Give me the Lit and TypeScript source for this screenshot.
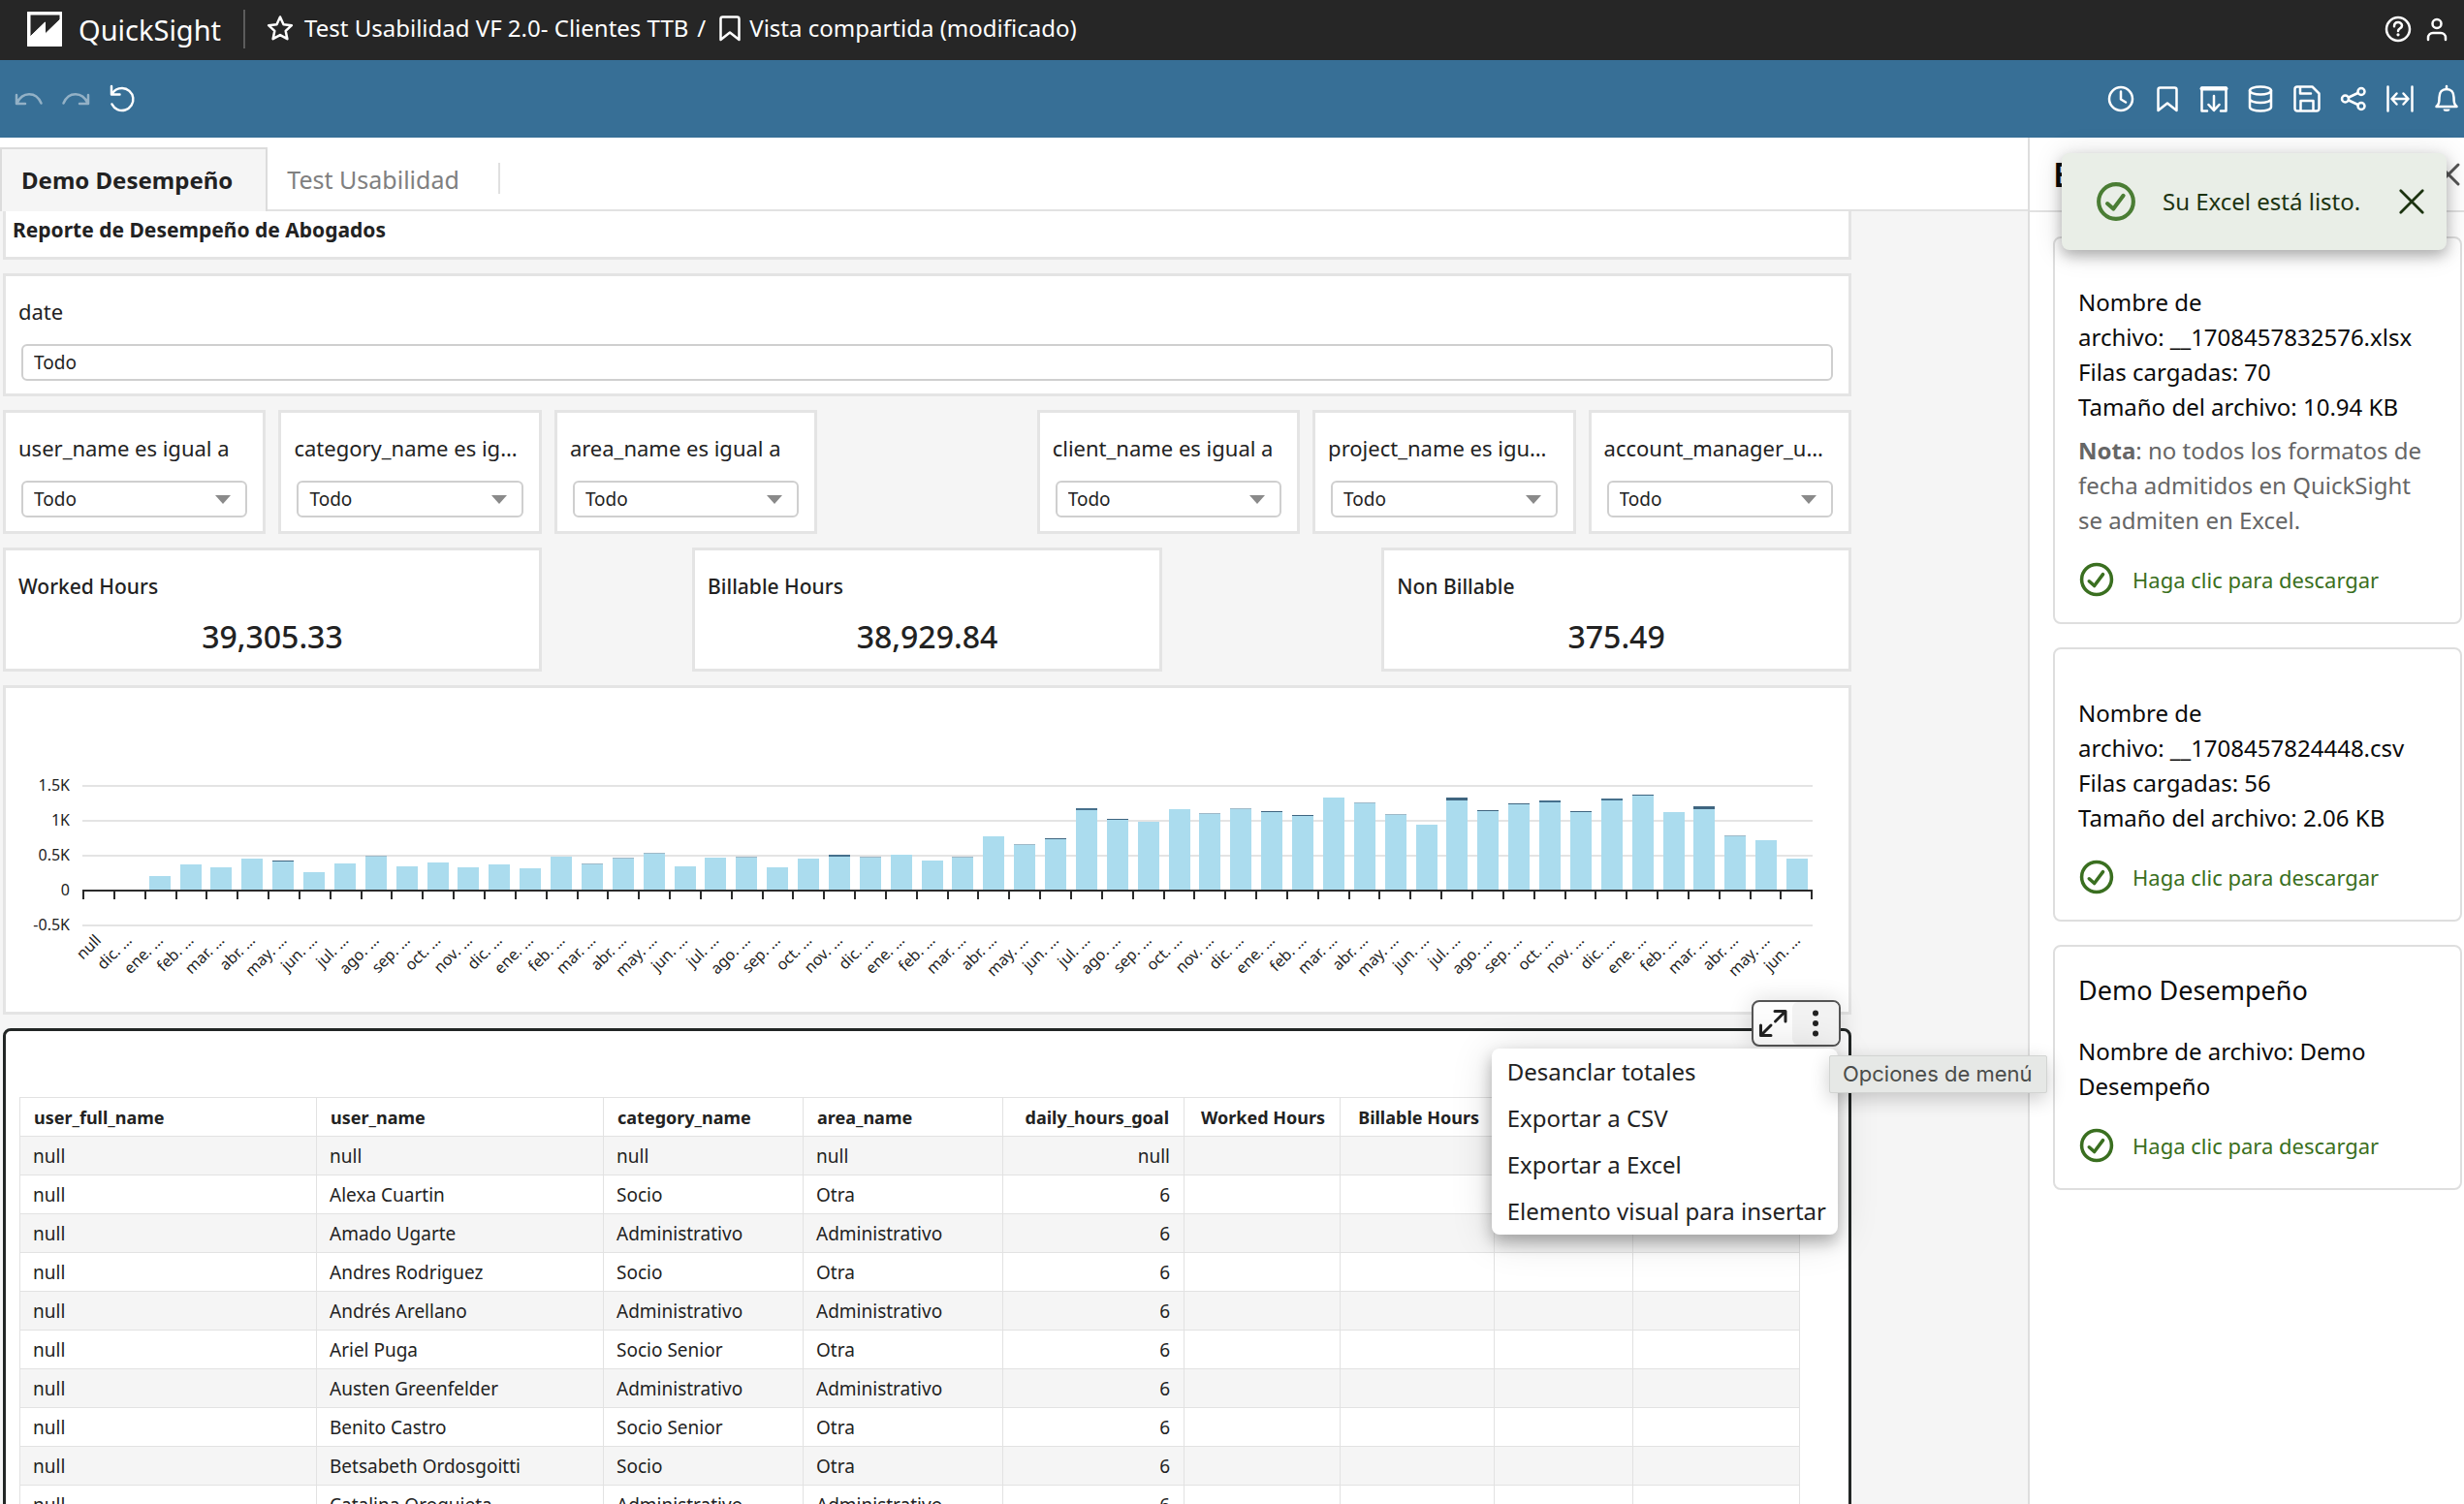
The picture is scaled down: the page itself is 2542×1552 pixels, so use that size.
import { LitElement, html, svg, css, nothing } from "lit";
import { customElement, property } from "lit/decorators.js";
import { classMap } from "lit/directives/class-map.js";
import { styleMap } from "lit/directives/style-map.js";

const base = css`
  *, *::before, *::after { box-sizing: border-box; }
  h1, h2, h3, p { margin: 0; font-weight: 400; }
  button {
    border: 0;
    padding: 0;
    margin: 0;
    background: none;
    color: inherit;
    font: inherit;
    cursor: pointer;
  }
  svg { display: block; fill: none; stroke: currentColor; }
`;

const icons = {
  undo: svg`<path d="M3 12v9h9M3.500 20.500C9 8.500 23 8 28.500 20.500"/>`,
  redo: svg`<path d="M29 12v9h-9M28.500 20.500C23 8.500 9 8 3.500 20.500"/>`,
  reset: svg`<path d="M5 3v8.500H13.500M5.500 11C8 6.500 12 5 16 5A11.500 11.500 0 1 1 5.500 21.500"/>`,
  clock: svg`<circle cx="16" cy="16" r="12"/><path d="M16 8.500v8l5 3"/>`,
  bookmark: svg`<path d="M6.500 28V6.500a2 2 0 0 1 2-2h15a2 2 0 0 1 2 2V28L16 20.500z"/>`,
  exportBox: svg`<path d="M9 28.500H3.500V4.500h25v24H23M16 13v14.500M10.500 22l5.500 6 5.500-6"/><path d="M3.500 5.500h25" stroke-width="4"/>`,
  database: svg`<ellipse cx="16" cy="7.500" rx="11" ry="4"/><path d="M5 7.500v17c0 2.200 5 4 11 4s11-1.800 11-4v-17M5 16c0 2.200 5 4 11 4s11-1.800 11-4"/>`,
  save: svg`<path d="M6 3.500h15.500l7 7V26a2.500 2.500 0 0 1-2.500 2.500H6A2.500 2.500 0 0 1 3.500 26V6A2.500 2.500 0 0 1 6 3.500zM9 4v6.500h11M9.500 28v-10h13v10"/>`,
  share: svg`<circle cx="7.500" cy="16" r="3.500"/><circle cx="24" cy="8.500" r="3.500"/><circle cx="24" cy="23.500" r="3.500"/><path d="M11 14.500l9.500-4.500M11 17.500l9.500 4.500"/>`,
  fit: svg`<path d="M3.500 3.500v25M28.500 3.500v25M7.500 16h17M12.500 10.500L7.500 16l5 5.500M19.500 10.500l5 5.500-5 5.500"/>`,
  bell: svg`<path d="M5.500 24h21c-2.500-2.500-3-4-3-9.500C23.500 9 20.500 6 16 6s-7.500 3-7.500 8.500c0 5.500-.5 7-3 9.500z"/><path d="M16 3v3"/><path d="M12.500 26.500h7a3.500 2.500 0 0 1-7 0z" fill="currentColor" stroke="none"/>`,
  help: svg`<circle cx="16" cy="16" r="12"/><path d="M12 13.200c0-5.600 8-5.200 8-.7 0 2.900-4 2.700-4 5.600"/><circle cx="16" cy="21.800" r="1.600" fill="currentColor" stroke="none"/>`,
  person: svg`<circle cx="16" cy="10.500" r="4.500"/><path d="M7 27v-2a5 5 0 0 1 5-5h8a5 5 0 0 1 5 5v2"/>`,
  star: svg`<path d="M16 4.500l3.500 7.700 8.400 1-6.200 5.700 1.700 8.300L16 23.100l-7.400 4.100 1.700-8.300-6.200-5.700 8.400-1z"/>`,
  close: svg`<path d="M6 6l20 20M26 6L6 26"/>`,
  check: svg`<circle cx="16" cy="16" r="13"/><path d="M9.500 17.500l4.500 4 7.500-10"/>`,
  expand: svg`<path d="M18 3.500h11V14M28 4.500L18.500 14M3.500 18v10.500H14M4.500 27.500L14 18"/>`,
  dots: svg`<g fill="currentColor" stroke="none"><circle cx="16" cy="5.500" r="3"/><circle cx="16" cy="16" r="3"/><circle cx="16" cy="26.500" r="3"/></g>`,
};
type IconName = keyof typeof icons;

const icon = (name: IconName, size = 32, stroke = 2) => html`
  <svg width=${size} height=${size} viewBox="0 0 32 32" stroke-width=${stroke}
    stroke-linecap="round" stroke-linejoin="round" aria-hidden="true">${icons[name]}</svg>`;

const MONTHS = ["ene.", "feb.", "mar.", "abr.", "may.", "jun.", "jul.", "ago.", "sep.", "oct.", "nov.", "dic."];

/** Monthly hours: [hours worked, size of the non-billable cap: 0 none, 1 faint, 2 thin, 3 medium, 4 thick]. */
const HOURS: [number, number][] = [
  [0, 0], [0, 0],
  [200, 0], [355, 0], [325, 0], [440, 0], [410, 2], [245, 0], [380, 0], [490, 1], [338, 0], [393, 0], [315, 0], [355, 0],
  [305, 0], [475, 0], [370, 1], [453, 1], [530, 1], [333, 0], [453, 0], [477, 1], [315, 0], [448, 0], [505, 3], [477, 1],
  [503, 0], [422, 0], [477, 1], [758, 0], [657, 1], [730, 2], [1170, 3], [1008, 2], [967, 0], [1147, 0], [1092, 1], [1160, 1],
  [1128, 2], [1072, 2], [1324, 0], [1253, 1], [1078, 1], [935, 0], [1324, 4], [1142, 2], [1240, 2], [1282, 3], [1120, 2], [1310, 3],
  [1356, 2], [1115, 0], [1193, 4], [773, 1], [703, 0], [448, 0],
];
const PX_PER_HOUR = 0.072;

@customElement("hours-chart")
class HoursChart extends LitElement {
  static styles = [base, css`
    :host { display: block; height: 340px; padding: 0 37px 0 0; }
    .chart { display: flex; gap: 13px; padding-top: 82px; }
    .scale { display: flex; flex-direction: column; width: 66px; text-align: right; }
    .scale span { font-size: 16px; line-height: 36px; }
    .plot { flex: 1; min-width: 0; padding-top: 18px; }
    .grid { height: 146px; background: repeating-linear-gradient(#e4e4e4 0 2px, transparent 2px 36px); }
    .bars { display: flex; align-items: flex-end; height: 110px; border-bottom: 2px solid #2a2a2a; }
    .slot { flex: 1; display: flex; justify-content: center; }
    .bar { width: 22px; background: #abdcee; }
    .cap1 { border-top: 1px solid #9fb9c8; }
    .cap2 { border-top: 1px solid #3f6580; }
    .cap3 { border-top: 2px solid #46708c; }
    .cap4 { border-top: 3px solid #3f6580; }
    .ticks { display: flex; height: 8px; border-right: 2px solid #2a2a2a; }
    .ticks i { flex: 1; border-left: 2px solid #2a2a2a; }
    .months { display: flex; padding-top: 1px; }
    .month { flex: 1; width: 0; display: flex; justify-content: flex-end; padding-right: 16px; }
    .month span {
      font-size: 16px;
      line-height: 20px;
      white-space: nowrap;
      transform: rotate(-45deg);
      transform-origin: 100% 50%;
    }
  `];

  private label(i: number) {
    if (i === 0) return "null";
    return `${MONTHS[(i + 10) % 12]} …`;
  }

  render() {
    return html`
      <div class="chart">
        <div class="scale">${["1.5K", "1K", "0.5K", "0", "-0.5K"].map((t) => html`<span>${t}</span>`)}</div>
        <div class="plot">
          <div class="grid">
            <div class="bars">
              ${HOURS.map(([h, cap]) => html`<div class="slot">${h
                ? html`<div class=${`bar cap${cap}`} style=${styleMap({ height: `${Math.round(h * PX_PER_HOUR)}px` })}></div>`
                : nothing}</div>`)}
            </div>
            <div class="ticks">${HOURS.map(() => html`<i></i>`)}</div>
          </div>
          <div class="months">${HOURS.map((_, i) => html`<div class="month"><span>${this.label(i)}</span></div>`)}</div>
        </div>
      </div>`;
  }
}

@customElement("filter-control")
class FilterControl extends LitElement {
  @property() label = "";
  @property() kind: "select" | "text" = "select";

  static styles = [base, css`
    :host { display: block; height: 128px; padding: 21px 13px 0; }
    :host([kind="text"]) { height: 127px; }
    label {
      display: block;
      margin-right: 8px;
      font-size: 22px;
      line-height: 30px;
      white-space: nowrap;
      overflow: hidden;
      text-overflow: ellipsis;
    }
    .field { position: relative; margin: 19px 3px 0; }
    select, input {
      display: block;
      width: 100%;
      height: 38px;
      margin: 0;
      padding: 0 11px;
      border: 2px solid #cfcfcf;
      border-radius: 6px;
      background: #fff;
      color: #222;
      font: inherit;
      font-size: 19px;
      appearance: none;
    }
    .caret {
      position: absolute;
      right: 17px;
      top: 15px;
      border: 8px solid transparent;
      border-top: 9px solid #8a8a8a;
      border-bottom: 0;
      pointer-events: none;
    }
  `];

  render() {
    return html`
      <label for="control" title=${this.label}>${this.label}</label>
      <div class="field">
        ${this.kind === "text"
          ? html`<input id="control" type="text" value="Todo">`
          : html`<select id="control"><option>Todo</option></select><span class="caret"></span>`}
      </div>`;
  }
}

const COLUMNS: [string, number][] = [
  ["user_full_name", 306], ["user_name", 296], ["category_name", 206], ["area_name", 206], ["daily_hours_goal", 187],
  ["Worked Hours", 161], ["Billable Hours", 159], ["", 143], ["", 172],
];
const ROWS = [
  ["null", "null", "null", "null", "null"],
  ["null", "Alexa Cuartin", "Socio", "Otra", "6"],
  ["null", "Amado Ugarte", "Administrativo", "Administrativo", "6"],
  ["null", "Andres Rodriguez", "Socio", "Otra", "6"],
  ["null", "Andrés Arellano", "Administrativo", "Administrativo", "6"],
  ["null", "Ariel Puga", "Socio Senior", "Otra", "6"],
  ["null", "Austen Greenfelder", "Administrativo", "Administrativo", "6"],
  ["null", "Benito Castro", "Socio Senior", "Otra", "6"],
  ["null", "Betsabeth Ordosgoitti", "Socio", "Otra", "6"],
  ["null", "Catalina Oroquieta", "Administrativo", "Administrativo", "6"],
];

@customElement("hours-table")
class HoursTable extends LitElement {
  static styles = [base, css`
    :host { display: block; position: relative; padding: 68px 51px 0 14px; }
    table { width: 100%; table-layout: fixed; border-collapse: collapse; font-size: 19px; }
    th, td {
      height: 40px;
      padding: 0 14px 0 13px;
      border: 1px solid #e2e2e2;
      text-align: left;
      white-space: nowrap;
      line-height: 24px;
    }
    th { font-size: 18px; font-weight: 700; padding: 0 15px 0 14px; }
    .num { text-align: right; }
    tbody tr:nth-child(odd) { background: #f5f5f5; }
    .actions {
      position: absolute;
      top: -32px;
      right: 8px;
      display: flex;
      width: 92px;
      height: 48px;
      border: 2px solid #555;
      border-radius: 8px;
      background: #fdfdfd;
      overflow: hidden;
      box-shadow: 0 0 24px rgba(0, 0, 0, 0.14);
    }
    .actions button { width: 40px; display: grid; place-items: center; }
    .actions .active { flex: 1; background: #f2f2f2; border-radius: 6px 0 0 6px; }
    .menu {
      position: absolute;
      top: 18px;
      right: 11px;
      display: flex;
      flex-direction: column;
      border-radius: 8px;
      background: #fff;
      box-shadow: 0 8px 16px rgba(0, 0, 0, 0.28), 0 4px 44px rgba(0, 0, 0, 0.14);
    }
    .menu button { padding: 0 12px 0 16px; font-size: 24px; line-height: 48px; text-align: left; white-space: nowrap; }
    .tip {
      position: absolute;
      top: 25px;
      left: calc(100% - 20px);
      padding: 0 14px 0 13px;
      border: 1px solid #d2d4d2;
      border-radius: 2px;
      background: #e6e8e6;
      color: #4a4c4a;
      font: 22px/37px Inter, sans-serif;
      white-space: nowrap;
      box-shadow: 0 6px 20px rgba(0, 0, 0, 0.2);
    }
  `];

  render() {
    return html`
      <table>
        <colgroup>${COLUMNS.map(([, w]) => html`<col style=${styleMap({ width: `${w}px` })}>`)}</colgroup>
        <thead><tr>${COLUMNS.map(([name], i) => html`<th scope="col" class=${classMap({ num: i > 3 })}>${name}</th>`)}</tr></thead>
        <tbody>
          ${ROWS.map((row) => html`<tr>${COLUMNS.map((_, i) => html`<td class=${classMap({ num: i > 3 })}>${row[i] ?? ""}</td>`)}</tr>`)}
        </tbody>
      </table>
      <div class="actions">
        <button aria-label="Maximizar">${icon("expand", 32, 3)}</button>
        <button class="active" aria-label="Opciones de menú">${icon("dots", 32)}</button>
      </div>
      <div class="menu" role="menu">
        ${["Desanclar totales", "Exportar a CSV", "Exportar a Excel", "Elemento visual para insertar"].map(
          (t) => html`<button role="menuitem">${t}</button>`)}
      </div>
      <div class="tip" role="tooltip">Opciones de menú</div>`;
  }
}

interface ExportFile { title?: string; name: string; rows?: string; size?: string; note?: boolean; }
const FILES: ExportFile[] = [
  { name: "__1708457832576.xlsx", rows: "70", size: "10.94 KB", note: true },
  { name: "__1708457824448.csv", rows: "56", size: "2.06 KB" },
  { title: "Demo Desempeño", name: "Demo Desempeño" },
];

@customElement("export-panel")
class ExportPanel extends LitElement {
  static styles = [base, css`
    :host { display: block; width: 450px; border-left: 2px solid #dedede; background: #fff; color: #0b0b0b; }
    .head {
      display: flex;
      align-items: center;
      justify-content: space-between;
      height: 77px;
      padding: 0 0 0 24px;
      border-bottom: 2px solid #e2e2e2;
    }
    h2 { font-size: 34px; font-weight: 600; line-height: 40px; }
    .head button { color: #555; }
    .list { display: flex; flex-direction: column; gap: 24px; padding: 25px 2px 24px 24px; }
    .file {
      padding: 48px 24px 24px;
      border: 2px solid #dedede;
      border-radius: 8px;
      font-size: 24px;
      line-height: 36px;
    }
    .titled { padding-top: 24px; }
    h3 { font-size: 27px; line-height: 42px; margin-bottom: 24px; }
    .note { margin-top: 9px; color: #666; }
    .note b { font-weight: 700; }
    .get {
      display: flex;
      align-items: center;
      gap: 18px;
      height: 40px;
      margin-top: 23px;
      color: #3a6f20;
      font-size: 22px;
      text-decoration: none;
    }
  `];

  render() {
    return html`
      <div class="head"><h2>Exportaciones</h2><button aria-label="Cerrar panel">${icon("close", 32, 3)}</button></div>
      <div class="list">
        ${FILES.map((f) => html`
          <article class=${classMap({ file: true, titled: !!f.title })}>
            ${f.title ? html`<h3>${f.title}</h3>` : nothing}
            <p>Nombre de archivo:&nbsp;${f.name}</p>
            ${f.rows ? html`<p>Filas cargadas: ${f.rows}</p>` : nothing}
            ${f.size ? html`<p>Tamaño del archivo: ${f.size}</p>` : nothing}
            ${f.note ? html`<p class="note"><b>Nota</b>: no todos los formatos de fecha admitidos en QuickSight se admiten en Excel.</p>` : nothing}
            <a class="get" href="#">${icon("check", 38, 3)}<span>Haga clic para descargar</span></a>
          </article>`)}
      </div>`;
  }
}

@customElement("app-root")
class AppRoot extends LitElement {
  static styles = [base, css`
    :host {
      display: flex;
      flex-direction: column;
      position: relative;
      height: 100vh;
      overflow: hidden;
      background: #fff;
      color: #222;
      font-family: "Noto Sans", "Open Sans", sans-serif;
    }
    .top {
      display: flex;
      align-items: center;
      height: 62px;
      flex: none;
      padding: 0 12px 2px 28px;
      background: #262626;
      color: #fff;
      font-size: 24px;
      line-height: 32px;
    }
    .brand { margin-left: 17px; padding-top: 2px; font-size: 29px; line-height: 40px; }
    .rule { width: 2px; height: 40px; margin: 0 20px 0 23px; background: #5c5c5c; }
    .crumbs { display: flex; align-items: center; gap: 9px; flex: 1; padding-bottom: 2px; }
    .crumbs h1 { font-size: 24px; line-height: 32px; }
    .view { display: flex; align-items: center; gap: 4px; }
    .account { display: flex; gap: 8px; }
    .tools {
      display: flex;
      align-items: center;
      justify-content: space-between;
      height: 80px;
      flex: none;
      padding: 0 2px 0 14px;
      background: #376f96;
      color: #fff;
    }
    .group { display: flex; gap: 16px; }
    .group .off { color: #93b1c6; }
    .body { display: flex; flex: 1; min-height: 0; }
    .work { flex: 1; min-width: 0; display: flex; flex-direction: column; background: #f5f5f5; }
    .tabs { display: flex; flex: none; height: 76px; padding-top: 10px; background: #fff; }
    .tabs::after { content: ""; flex: 1; border-bottom: 2px solid #e2e2e2; }
    .tab {
      padding: 2px 20px 0;
      border-bottom: 2px solid #e2e2e2;
      font-size: 25px;
      line-height: 32px;
      color: #808080;
    }
    .tab.on {
      padding: 0 34px 0 20px;
      border: 2px solid #dcdcdc;
      border-bottom: 0;
      background: #f5f5f5;
      color: #222;
      font-size: 24px;
      font-weight: 700;
    }
    .stop { display: flex; align-items: center; width: 22px; padding: 0 0 0 20px; border-bottom: 2px solid #e2e2e2; }
    .stop::before { content: ""; width: 2px; height: 32px; background: #e0e0e0; }
    .sheet {
      display: grid;
      grid-template-columns: repeat(27, minmax(0, 1fr));
      gap: 14px 13px;
      padding: 0 182px 0 3px;
    }
    .card { border: 3px solid #e4e4e4; background: #fff; }
    .full { grid-column: 1 / -1; }
    .w4 { grid-column-end: span 4; }
    .c1 { grid-column: 1 / span 8; }
    .c2 { grid-column: 11 / span 7; }
    .c3 { grid-column: 21 / span 7; }
    .skip { grid-column: 16 / span 4; }
    .heading { height: 50px; padding: 4px 7px 0; border-top: 0; font-size: 21px; line-height: 30px; font-weight: 700; }
    .kpi { height: 128px; padding: 22px 13px 0; }
    .kpi h2 { font-size: 21px; line-height: 30px; font-weight: 500; }
    .kpi p { margin-top: 17px; font-size: 32px; line-height: 40px; font-weight: 500; text-align: center; }
    .selected { border-color: #222625; border-radius: 8px; }
    export-panel { position: relative; flex: none; }
    hours-table { z-index: 1; }
    .toast {
      position: absolute;
      z-index: 2;
      top: 158px;
      right: 18px;
      display: flex;
      align-items: center;
      width: 397px;
      height: 100px;
      padding: 0 18px 0 34px;
      border-radius: 8px;
      background: #e9eee7;
      color: #1c3310;
      font-size: 24px;
      line-height: 32px;
      box-shadow: 0 6px 14px rgba(0, 0, 0, 0.26), 0 2px 30px rgba(0, 0, 0, 0.14);
    }
    .toast .ok { color: #4a7d34; }
    .toast p { flex: 1; margin-left: 26px; white-space: nowrap; }
  `];

  render() {
    return html`
      <header class="top">
        <svg width="36" height="36" viewBox="0 0 36 36" stroke="none" aria-hidden="true">
          <rect width="36" height="36" rx="1" fill="#fff"></rect>
          <path d="M3 3h31v5L18.500 23V11L3 26z" fill="#262626"></path>
        </svg>
        <span class="brand">QuickSight</span>
        <span class="rule"></span>
        <div class="crumbs">
          <button aria-label="Marcar como favorito">${icon("star", 32, 2.5)}</button>
          <h1>Test Usabilidad VF 2.0- Clientes TTB</h1>
          <span>/</span>
          <span class="view">${icon("bookmark", 32, 2.5)}<span>Vista compartida (modificado)</span></span>
        </div>
        <div class="account">
          <button aria-label="Ayuda">${icon("help", 32, 2.5)}</button>
          <button aria-label="Cuenta">${icon("person", 32, 2.5)}</button>
        </div>
      </header>
      <nav class="tools" aria-label="Herramientas">
        <div class="group">
          <button class="off" aria-label="Deshacer">${icon("undo", 32, 2.5)}</button>
          <button class="off" aria-label="Rehacer">${icon("redo", 32, 2.5)}</button>
          <button aria-label="Restablecer">${icon("reset", 32, 2.5)}</button>
        </div>
        <div class="group">
          ${(["clock", "bookmark", "exportBox", "database", "save", "share", "fit", "bell"] as IconName[]).map(
            (n) => html`<button aria-label=${n}>${icon(n, 32, 2.5)}</button>`)}
        </div>
      </nav>
      <div class="body">
        <main class="work">
          <div class="tabs">
            <button class="tab on">Demo Desempeño</button>
            <button class="tab">Test Usabilidad</button>
            <span class="stop"></span>
          </div>
          <div class="sheet">
            <h2 class="card full heading">Reporte de Desempeño de Abogados</h2>
            <filter-control class="card full" kind="text" label="date"></filter-control>
            <filter-control class="card w4" label="user_name es igual a"></filter-control>
            <filter-control class="card w4" label="category_name es igual a"></filter-control>
            <filter-control class="card w4" label="area_name es igual a"></filter-control>
            <filter-control class="card skip" label="client_name es igual a"></filter-control>
            <filter-control class="card w4" label="project_name es igual a"></filter-control>
            <filter-control class="card w4" label="account_manager_user_name es igual a"></filter-control>
            <section class="card kpi c1"><h2>Worked Hours</h2><p>39,305.33</p></section>
            <section class="card kpi c2"><h2>Billable Hours</h2><p>38,929.84</p></section>
            <section class="card kpi c3"><h2>Non Billable</h2><p>375.49</p></section>
            <hours-chart class="card full"></hours-chart>
            <hours-table class="card full selected"></hours-table>
          </div>
        </main>
        <export-panel></export-panel>
      </div>
      <div class="toast" role="status">
        <span class="ok">${icon("check", 44, 3)}</span>
        <p>Su Excel está listo.</p>
        <button aria-label="Cerrar aviso">${icon("close", 36, 2.5)}</button>
      </div>`;
  }
}
